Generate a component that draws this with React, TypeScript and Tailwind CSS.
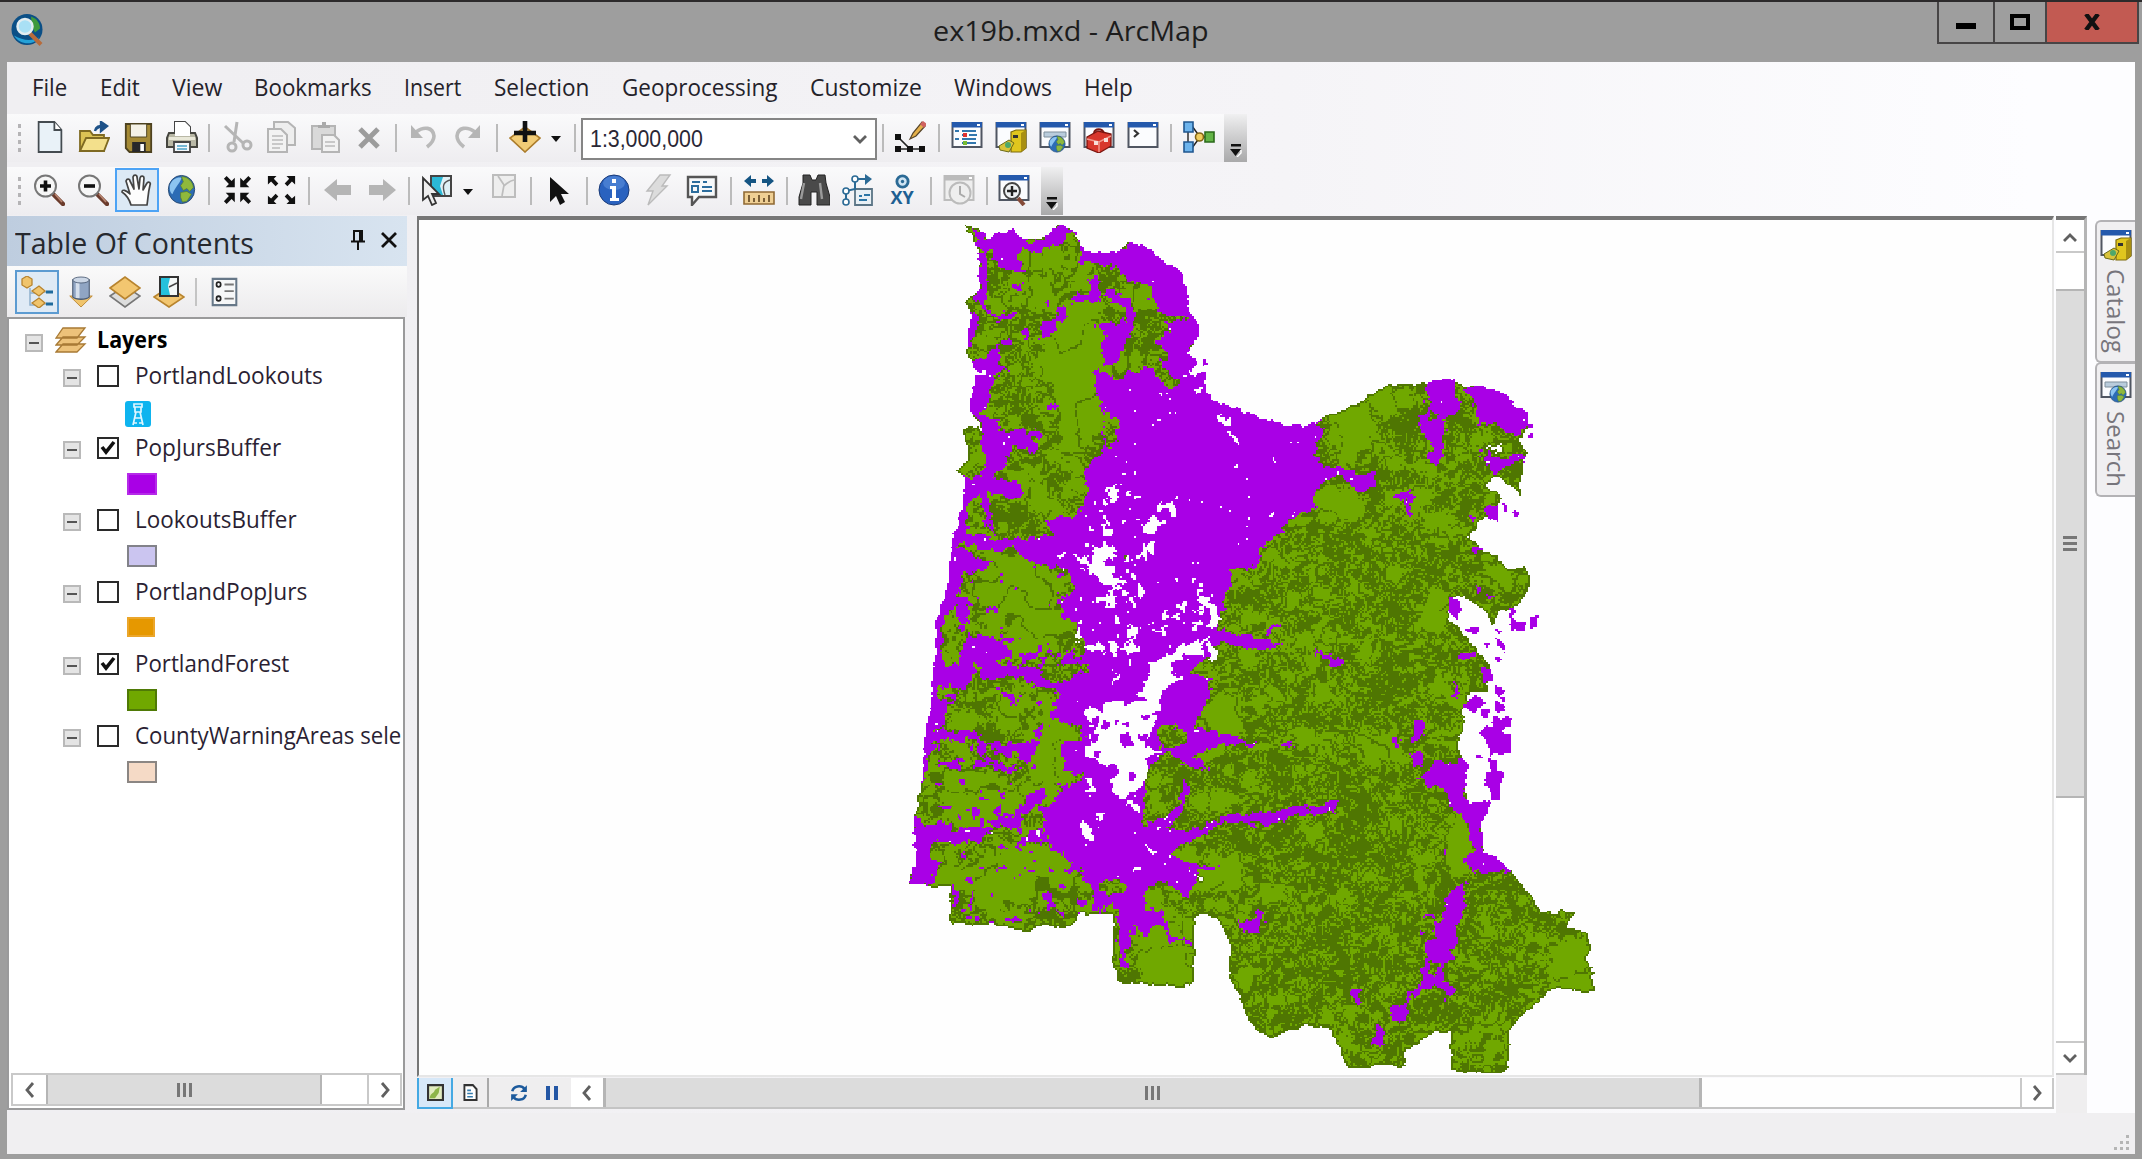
import { useLayoutEffect, useMemo, useRef, type ReactNode } from 'react';

/* ---------- text that fills a given width ---------- */
function Fit({ w, children, className = '' }: { w: number; children: string; className?: string }) {
  const ref = useRef<HTMLSpanElement>(null);
  useLayoutEffect(() => {
    const el = ref.current;
    if (el) el.style.transform = `scaleX(${w / el.offsetWidth})`;
  }, [w]);
  return (
    <span className="block shrink-0" style={{ width: w }}>
      <span ref={ref} className={`inline-block origin-left whitespace-nowrap ${className}`}>{children}</span>
    </span>
  );
}

/* ---------- map ---------- */
type Poly = { p: number[]; x0: number; x1: number; y0: number; y1: number };
const mk = (p: number[]): Poly => {
  const xs = p.filter((_, i) => i % 2 === 0);
  const ys = p.filter((_, i) => i % 2 === 1);
  return { p, x0: Math.min(...xs), x1: Math.max(...xs), y0: Math.min(...ys), y1: Math.max(...ys) };
};
const sheet = (ox: number, oy: number, src: string): Poly[] =>
  src.trim().split(';').map((s) => s.trim()).filter(Boolean)
    .map((s) => mk(s.split(/[\s,]+/).map(Number).map((v, i) => (i % 2 === 0 ? ox : oy) + v / 3)));
const plain = (src: string): Poly[] => [mk(src.trim().split(/[\s,]+/).map(Number))];

const LAND = plain(`965,226 977,230 988,240 995,235 1013,231 1020,240 1047,237 1058,225 1070,230 1078,240 1082,250 1097,253 1117,253
1127,243 1145,247 1155,258 1177,270 1184,282 1187,308 1200,328 1193,347 1187,353 1195,362 1187,378 1202,373 1205,392 1212,402 1233,408 1258,419
1270,420 1280,426 1303,426 1317,422 1323,417 1343,410 1362,402 1373,392 1387,385 1427,385 1433,382 1453,380 1463,387 1480,385 1508,397 1513,408
1527,412 1527,430 1517,442 1527,453 1521,467 1520,497 1510,487 1495,477 1485,487 1503,498 1485,517 1467,537 1480,550 1495,557 1505,570 1525,568
1530,583 1517,607 1497,613 1492,625 1482,610 1463,598 1450,598 1447,620 1458,630 1473,647 1480,658 1488,665 1487,692 1470,693 1460,713 1463,723
1457,747 1460,757 1468,767 1463,787 1468,803 1490,802 1480,828 1482,853 1493,857 1510,872 1527,893 1540,912 1553,915 1560,910 1573,913 1565,927
1585,933 1590,950 1585,960 1593,972 1592,993 1550,990 1537,1003 1517,1020 1508,1033 1507,1072 1497,1074 1450,1072 1450,1033 1432,1033 1403,1053
1403,1066 1345,1069 1338,1047 1330,1030 1303,1027 1270,1039 1260,1033 1247,1022 1237,993 1228,977 1228,940 1217,920 1200,915 1193,918 1193,985 1177,989
1163,987 1117,983 1112,965 1112,915 1077,915 1075,923 1062,930 1043,925 1030,931 1010,930 993,925 948,925 949,888 908,885 915,863 913,830 920,783
922,760 930,703 935,650 933,627 943,600 948,575 950,548 962,502 963,478 955,472 968,458 962,432 968,425 982,432 968,407 975,375 965,352 970,315
965,303 978,290 977,252`);

const VALLEY = plain(`1078,235 1097,248 1117,250 1127,240 1147,243 1180,266 1188,282 1192,308 1204,328 1190,350 1205,370 1210,398 1258,415 1280,420 1317,416 1323,430 1313,455
1325,467 1343,470 1362,477 1375,473 1370,490 1362,493 1340,478 1325,482 1313,493 1316,510 1297,513 1280,532 1260,550 1257,570 1233,580 1230,608
1217,617 1217,630 1247,637 1283,645 1253,652 1217,643 1210,657 1187,673 1210,680 1210,693 1193,727 1217,733 1260,747 1220,747 1190,757 1210,772
1180,765 1167,753 1147,767 1143,797 1140,827 1153,823 1177,807 1183,780 1190,787 1185,803 1167,830 1200,830 1223,815 1280,810 1293,808 1322,806 1338,801
1333,812 1280,819 1260,826 1220,823 1190,842 1170,853 1193,867 1218,866 1197,873 1187,900 1177,890 1160,883 1143,893 1143,910 1160,912 1172,937 1190,941
1190,946 1170,942 1157,925 1143,938 1130,923 1133,937 1123,953 1127,970 1120,967 1117,930 1112,903 1093,913 1092,890 1080,873 1060,873 1070,863
1050,847 1043,817 1053,797 1080,780 1063,770 1063,743 1080,740 1077,727 1050,720 1058,693 1043,690 1083,672 1087,663 1057,667 1067,650 1077,643
1073,625 1060,617 1058,603 1073,592 1067,568 1050,568 1020,558 1017,543 1053,535 1043,522 1073,518 1087,492 1083,472 1100,455 1103,428 1100,402 1093,385
1100,358 1080,262`);

const PURPLE: Poly[] = [
  ...sheet(900, 215, `210,40 260,70 340,48 370,80 440,70 480,30 520,50 500,75 450,105 400,120 360,100 345,130 380,175 330,165 290,160 270,110 250,115 225,90;
  225,110 255,120 262,200 250,260 270,300 350,295 340,320 270,312 225,260 235,200; 195,290 222,290 215,400 195,405;
  205,440 250,430 290,390 300,430 280,460 330,470 280,490 265,560 240,600 270,610 310,630 290,650 420,645 430,660 380,680 410,690 400,715 330,695 310,760 270,790 360,805 365,850 300,845 250,830 270,900 285,960 250,920 230,840 195,880 200,960 250,970 400,980 450,1040 400,1040 330,1000 230,1010 190,980 165,1000 260,1040 260,1070 190,1070 150,1200 100,1200 140,1000 180,850 185,790 240,780 245,650 220,590 195,575 225,480 210,470;
  415,320 460,310 465,360 415,380; 470,280 500,275 490,320 470,320; 350,340 380,345 375,375 355,360; 440,560 470,570 465,585 445,580; 300,380 330,370 320,400 300,390; 340,205 365,205 360,230 345,225; 430,262 450,262 445,275`),
  ...sheet(900, 600, `140,0 120,80 120,210 105,330 90,395 240,400 250,470 230,460 228,418 100,420 80,470 60,560 45,550 80,300 90,150 85,90 110,0;
  110,200 180,190 190,130 200,100 215,110 270,110 330,150 330,180 270,190 350,200 400,200 450,250 440,270 370,240 300,230 240,240 230,190 200,270 110,260;
  85,300 170,305 130,320 140,380 85,400; 250,425 330,435 420,420 395,400 430,370 430,390 380,490 340,450 320,470 270,445;
  105,485 170,488 175,512 110,502; 215,485 350,500 350,522 290,508 215,505; 300,275 350,285 350,315 320,305; 430,130 460,150 460,178;
  50,650 80,680 160,668 150,700 200,680 265,690 230,735 100,730 80,760 110,800 90,860 35,855 35,700; 260,660 330,658 350,640 380,590 440,562 430,595 380,645 350,682 260,678;
  345,755 380,700 430,685 445,735 390,730; 290,570 312,580 305,600; 215,630 232,630 225,665; 268,645 300,620 298,645; 170,755 190,755 188,780; 295,730 315,745 300,757;
  155,855 170,890 165,930 150,930; 200,910 215,910 210,935; 520,905 560,898 555,920 525,922; 465,932 488,932 485,948; 1000,970 1040,970 1060,940 1095,938 1075,1005 1010,990; 160,0 205,0 200,70 165,60`),
  ...sheet(1180, 350, `255,850 290,812 305,825 265,858; 405,900 480,938 480,952 450,948 410,922; 645,428 692,425 692,495 672,485 675,455 650,450;
  740,98 765,88 825,85 830,190 795,200 785,300 765,350 742,335 750,300 725,240 712,220 740,180;
  850,115 900,100 990,135 1000,178 1045,182 1040,240 1000,260 940,220 890,225 880,170; 900,310 960,325 1045,308 1035,332 965,350 940,385 910,335`),
  ...sheet(1260, 650, `480,385 520,345 590,345 605,315 630,355 620,385 605,410 625,455 695,452 668,530 658,540 663,605 705,615 755,668 640,672 610,635 640,600 620,530 590,500 560,470 560,420 500,410;
  445,308 485,308 487,352 453,352; 463,208 477,208 487,260 455,275; 390,276 414,278 407,294; 540,595 562,598 557,617;
  582,702 617,705 602,800 580,830 599,880 570,900 577,930 548,950 552,990 582,1020 568,1038 520,1010 480,1028 445,1050 445,1090 422,1120 383,1102 385,1080 430,1065 438,1035 475,1010 490,930 510,925 488,885 520,870 515,830 542,810 555,750;
  268,1022 292,1020 300,1067 283,1065; 338,1115 370,1145 357,1188 330,1188 343,1150; 493,798 522,798 512,818; 476,838 502,843 482,860; 60,285 98,276 98,293 62,294; 575,105 597,135 595,150 582,140; 545,1045 560,1050 555,1062`),
];

/* patches lying outside the forest edge */
const OUTLIERS: Poly[] = [
  ...sheet(1180, 350, `912,475 950,472 952,515 920,508; 958,462 982,465 975,492; 993,480 1022,492 1002,508; 863,498 888,503 872,522; 866,590 910,600 882,618; 880,708 903,715 892,732; 918,738 946,742 928,757;
  803,740 837,755 832,815 805,790; 983,773 1000,778 1000,818 1033,820 1033,843 988,842; 1046,803 1067,803 1067,834 1046,834; 853,838 892,833 888,852 856,854; 938,838 965,843 958,860; 908,880 928,882 922,896; 938,863 976,888 972,912 945,888; 832,920 887,903 882,922 838,932; 1040,222 1054,222 1054,236 1040,236; 1043,252 1058,252 1058,264 1043,264; 62,30 76,30 76,46 62,46; 58,66 74,66 72,90 55,85`),
  ...sheet(1260, 650, `662,58 693,58 693,97 664,97; 699,103 730,125 722,147 704,135; 703,156 730,168 727,187 706,187; 603,168 640,133 672,160 640,192; 661,178 687,183 682,210 664,207;
  693,206 754,203 747,232 715,247 747,258 747,312 685,318 680,287 658,250 680,226 700,235; 644,317 664,318 663,330 644,330; 680,328 707,335 705,362 728,370 717,455 690,452 690,420 668,410 675,375 695,375; 704,20 720,24 716,42 705,40; 720,143 735,145 733,156 722,155`),
];

const REGROWTH: Poly[] = [
  ...sheet(900, 215, `500,110 540,140 640,160 700,210 750,210 740,250 790,300 870,312 790,325 810,350 755,385 805,415 780,455 840,500 800,520 740,460 680,470 650,500 600,470 520,400; 655,95 680,82 690,95 670,112 660,110;
  985,1065 1040,1070 1080,1040 1080,1200 980,1200 960,1150 990,1120; 600,1065 620,1070 610,1100 598,1090; 660,1020 680,1025 665,1045; 610,590 650,620 655,680 610,700`),
  ...sheet(900, 600, `750,205 780,200 775,222 755,225; 765,385 850,385 855,420 800,450 765,430; 500,520 540,520 530,545 500,540; 520,375 545,385 545,415 520,410; 240,650 260,655 255,665; 590,850 650,840 670,870 620,890 600,880; 540,110 560,160 520,180 510,150`),
  ...sheet(1180, 350, `748,183 772,188 768,212 750,212; 160,660 205,665 205,710 180,700; 400,440 430,430 425,475 398,470; 920,290 950,280 945,300`),
  ...sheet(1260, 650, `515,935 535,940 528,975 508,980`),
];
const REBUFFER = sheet(900, 215, `580,232 640,232 690,260 705,320 685,370 665,415 640,440 605,465 598,400 620,360 605,345 580,335 680,318 670,278; 560,192 592,190 592,262 520,262 525,238 560,240`);

const HOLES: Poly[] = [
  ...sheet(900, 600, `540,325 570,330 600,345 640,295 700,310 740,240 745,190 800,165 880,125 915,150 850,160 840,190 800,220 848,235 800,255 780,290 765,350 740,400 735,450 795,458 730,475 735,545 705,580 645,592 625,550 650,530 640,500 600,500 545,468 560,420 580,380;
  528,85 548,98 530,132; 558,148 590,122 614,155 572,160; 658,145 700,122 714,155 672,168; 675,78 707,88 712,117 690,112; 900,5 947,28 948,70 912,88 932,58; 905,112 962,160 940,190; 556,538 582,538 590,585 565,582; 582,642 610,642 608,662 585,660; 538,662 577,695 578,730 545,705; 680,605 700,605 718,642 700,635; 688,818 705,800 710,812 695,825; 735,742 770,752 750,768; 872,815 905,832 892,842; 626,245 652,232 640,256; 620,0 636,0 632,28 622,20; 628,130 646,130 645,180 632,180; 760,95 800,85 795,110`),
  ...sheet(1180, 350, `108,198 150,208 145,228 120,215; 138,238 168,265 165,280 150,270; 915,300 960,292 955,302 925,308; 45,112 57,112 57,130 45,130; 60,760 100,780 110,820 75,835 90,800; 20,880 70,875 60,920 10,915`),
  ...sheet(900, 215, `718,930 750,905 790,930 752,962 720,945; 740,990 768,982 722,1048 710,1030; 578,1000 638,992 638,1025 600,1040 642,1060 645,1125 600,1120 590,1090 556,1080 575,1045; 512,1015 552,1032 575,1052 545,1058; 603,910 620,920 610,950; 558,930 582,938 570,950; 755,878 818,858 820,915 800,882 770,892; 618,1140 642,1140 640,1180 620,1178; 620,815 650,815 640,860 620,858; 668,840 688,835 682,855; 470,1015 495,1020 485,1035; 210,470 250,472 248,480 212,480`),
];
const ISLETS = sheet(900, 600, `655,400 682,403 690,430 698,440 665,448; 708,403 738,403 735,425 712,425; 663,368 682,368 680,390; 684,518 705,518 702,547 686,545; 808,190 855,182 842,218 808,208; 663,290 715,292 745,300 700,310 670,318; 722,352 742,352 742,366 722,366; 605,360 625,365 618,395 602,390; 575,355 595,360 588,385 572,380; 640,355 652,360 645,385; 568,400 590,405 588,430 568,428; 575,455 600,460 598,480 578,475`);

const inside = (g: Poly, x: number, y: number) => {
  if (x < g.x0 || x > g.x1 || y < g.y0 || y > g.y1) return false;
  const { p } = g;
  let r = false;
  for (let i = 0, j = p.length - 2; i < p.length; j = i, i += 2) {
    if (p[i + 1] > y !== p[j + 1] > y && x < ((p[j] - p[i]) * (y - p[i + 1])) / (p[j + 1] - p[i + 1]) + p[i]) r = !r;
  }
  return r;
};
const any = (l: Poly[], x: number, y: number) => l.some((g) => inside(g, x, y));
const hash = (x: number, y: number, s: number) => {
  let h = Math.imul(x, 374761393) ^ Math.imul(y, 668265263) ^ Math.imul(s, 1274126177);
  h = Math.imul(h ^ (h >>> 13), 1274126177);
  return ((h ^ (h >>> 16)) >>> 0) / 4294967295;
};
const noise = (x: number, y: number, s: number) => {
  const xi = Math.floor(x), yi = Math.floor(y);
  let u = x - xi, v = y - yi;
  u = u * u * (3 - 2 * u);
  v = v * v * (3 - 2 * v);
  const a = hash(xi, yi, s), b = hash(xi + 1, yi, s), c = hash(xi, yi + 1, s), d = hash(xi + 1, yi + 1, s);
  return a + (b - a) * u + (c - a) * v + (a - b - c + d) * u * v;
};
const fbm = (x: number, y: number, s: number) => noise(x, y, s) * 0.6 + noise(x * 2.1, y * 2.1, s + 9) * 0.4;

const CELL = 1.75, GX = 904, GY = 222, NX = 396, NY = 489;
/* stretches of smooth forest: cx, cy, rx, ry */
const SMOOTH = [[1080, 370, 26, 76], [1015, 600, 40, 45], [1050, 750, 22, 40], [980, 800, 35, 24], [1025, 870, 50, 30], [1340, 505, 22, 20], [1350, 430, 26, 22], [1570, 965, 22, 26], [1160, 960, 22, 20], [1220, 720, 18, 20], [1460, 850, 12, 36], [1390, 405, 18, 14], [1435, 610, 14, 22], [1500, 580, 14, 12]];

function buildMap() {
  const g = new Uint8Array(NX * NY);
  for (let j = 0; j < NY; j++) {
    for (let i = 0; i < NX; i++) {
      const x = GX + (i + 0.5) * CELL, y = GY + (j + 0.5) * CELL;
      const n1 = fbm(x / 6, y / 6, 1) - 0.5, n2 = fbm(x / 6, y / 6, 2) - 0.5;
      const px = x + n1 * 11, py = y + n2 * 11, qx = x + n1 * 5, qy = y + n2 * 5;
      let c = 0;
      if (any(LAND, qx, qy)) {
        c = 1;
        if (any(VALLEY, px, py) || any(PURPLE, px, py)) c = 3;
        if (c === 3 && any(REGROWTH, px, py)) c = 1;
        if (any(REBUFFER, px, py)) c = 3;
        if (c === 1 && x < 1100 && y > 560 && fbm(x / 10, y / 8, 31) > 0.76) c = 3;
        if (any(HOLES, px, py)) c = 0;
        if (c === 3) {
          const e = Math.hypot((x - 1115) / 50, (y - 570) / 100);
          const f = Math.hypot((x - 1190) / 40, (y - 615) / 55);
          const k = Math.max(0, 1 - Math.min(e, f));
          if (fbm(x / 6, y / 6, 44) > 0.87 - k * 0.3) c = 0;
        }
      }
      if (any(ISLETS, qx, qy)) c = 3;
      if (any(OUTLIERS, qx, qy)) c = 3;
      if (c === 1) {
        let sm = 0;
        for (const [cx, cy, rx, ry] of SMOOTH) sm = Math.max(sm, 1.3 - Math.hypot((x - cx) / rx, (y - cy) / ry));
        const east = Math.min(1, Math.max(0, (x - 1190) / 110));
        const low = fbm(x / 24, y / 20, 5);
        const dens = 0.5 + east * 0.28 + (low - 0.5) * 1.7 - Math.max(0, sm) * 1.5 - (x > 1480 && y > 880 ? 0.2 : 0);
        const wx = x + (noise(x / 5, y / 5, 61) - 0.5) * 7, wy = y + (noise(x / 5, y / 5, 62) - 0.5) * 7;
        const m = noise(wx / 11, wy / 10, 12);
        const t = noise(wx / 6.5, wy / 6.5, 77);
        const broad = Math.abs(noise(wx / 26, wy / 26, 20) - 0.5);
        if (broad < 0.022) c = 2;
        if (dens > 0.32 && Math.abs(m - 0.5) < 0.055) c = 2;
        if (dens > 0.44 && (Math.abs(m - 0.24) < 0.045 || Math.abs(m - 0.76) < 0.045)) c = 2;
        if (dens > 0.54 && Math.abs(t - 0.5) < 0.05 + (dens - 0.54) * 0.14) c = 2;
        if (dens > 0.72 && t < 0.25) c = 2;
      }
      g[j * NX + i] = c;
    }
  }
  const out = g.slice();
  for (let j = 1; j < NY - 1; j++)
    for (let i = 1; i < NX - 1; i++) {
      const k = j * NX + i;
      if (g[k] === 1 && (!g[k - 1] || !g[k + 1] || !g[k - NX] || !g[k + NX])) out[k] = 2;
    }
  const d = ['', '', '', ''];
  for (let j = 0; j < NY; j++) {
    let i = 0;
    while (i < NX) {
      const c = out[j * NX + i];
      let e = i + 1;
      while (e < NX && out[j * NX + e] === c) e++;
      if (c) d[c] += `M${i} ${j}h${e - i}v1h${i - e}z`;
      i = e;
    }
  }
  return d;
}

function ForestMap() {
  const d = useMemo(buildMap, []);
  return (
    <svg className="block h-[856px] w-[1635px]" viewBox="418 221 1635 856" shapeRendering="crispEdges">
      <g transform={`translate(${GX} ${GY}) scale(${CELL})`}>
        <path d={d[1]} fill="#70a800" />
        <path d={d[2]} fill="#4f7602" />
        <path d={d[3]} fill="#a900e6" />
      </g>
    </svg>
  );
}

/* ---------- icons ---------- */
function Svg({ children, s = 'h-8 w-8' }: { children: ReactNode; s?: string }) {
  return <svg viewBox="0 0 32 32" className={`${s} shrink-0`} fill="none" preserveAspectRatio="none">{children}</svg>;
}
const Win = ({ gray = false }: { gray?: boolean }) => (
  <>
    <rect x="1.5" y="2" width="29" height="24" fill={gray ? '#eee' : '#fbfcfe'} stroke={gray ? '#bdbdbd' : '#505662'} strokeWidth="2" />
    <path d="M1 1h30v5.5H1z" fill={gray ? '#bbb' : '#2459ac'} />
    <path d="M26 3h3v2h-3z" fill="#fff" />
  </>
);
const Globe = ({ x = 16, y = 16, r = 15 }: { x?: number; y?: number; r?: number }) => (
  <g transform={`translate(${x} ${y}) scale(${r / 15})`}>
    <circle r="14.5" fill="#2c6cb5" stroke="#26486f" />
    <path d="M-13 -4C-10 -12-3 -13 0 -12C-2 -6-7 -3-10 5C-13 2-13 0-13 -4" fill="#8cc4f0" />
    <path d="M0-13C7-14 13-7 13-2L9 2 6-1 2 1-1-4 2-8zM-1 3L6 2 11 5 6 12 1 13-1 8z" fill="#8fb83c" stroke="#557d24" strokeWidth=".7" />
  </g>
);
const Mag = ({ plus }: { plus: boolean }) => (
  <Svg>
    <path d="M21 21l9 9" stroke="#6b3b2c" strokeWidth="4.500" strokeLinecap="round" />
    <path d="M22 20l7 8" stroke="#b88570" strokeWidth="1.6" />
    <circle cx="12.500" cy="12" r="10.500" fill="#f6f6f6" stroke="#777" strokeWidth="2" />
    <path d={plus ? 'M7 12h11M12.500 6.500v11' : 'M7 12h11'} stroke="#111" strokeWidth="3.6" />
  </Svg>
);
const I: Record<string, ReactNode> = {
  new: <Svg s="h-8 w-[28px]"><path d="M3 1h18l8 8v22H3z" fill="#e9f2f8" stroke="#444b50" strokeWidth="2" /><path d="M21 1v8h8" fill="#fff" stroke="#444b50" strokeWidth="2" /></Svg>,
  open: <Svg><path d="M2 30V10h10l3 4h11v16z" fill="#dcc254" stroke="#7f6a22" strokeWidth="1.8" /><path d="M2 30l6-13h23l-5 13z" fill="#f3e08c" stroke="#7f6a22" strokeWidth="1.8" /><path d="M17 10c1-5 4-5 8-5M23 1l6 4-6 5z" stroke="#1e5288" strokeWidth="2.4" fill="#1e5288" /></Svg>,
  save: <Svg s="h-8 w-[29px]"><path d="M2 3h28v28H6l-4-4z" fill="#a58a35" stroke="#4d4220" strokeWidth="2" /><path d="M7 3h18v13H7z" fill="#f4f1e6" stroke="#4d4220" /><path d="M9 21h15v10H9z" fill="#28282a" /><path d="M18 23h4v7h-4z" fill="#fff" /></Svg>,
  print: <Svg><path d="M9 15V1h10l5 5v9" fill="#fff" stroke="#444" strokeWidth="2" /><path d="M3 12h26l2 5v9H1v-9z" fill="#b9b8a6" stroke="#45453f" strokeWidth="2" /><path d="M9 15V1h10l5 5v9z" fill="#fff" /><path d="M3 16h26v3H3z" fill="#e9e8d8" /><path d="M8 21h16v10H8z" fill="#f4f8fb" stroke="#444" strokeWidth="1.8" /><path d="M11 25h10M11 28h10" stroke="#4ba1c9" strokeWidth="1.6" /></Svg>,
  cut: <Svg><path d="M4 5l18 17M16 1l-3 20" stroke="#b5b5b5" strokeWidth="3" /><circle cx="11" cy="26" r="4" stroke="#b5b5b5" strokeWidth="3" /><circle cx="26" cy="24" r="4" stroke="#b5b5b5" strokeWidth="3" /></Svg>,
  copy: <Svg><path d="M9 1h14l7 6v17H9z" fill="#eee" stroke="#b5b5b5" strokeWidth="2" /><path d="M3 8h13l6 6v17H3z" fill="#f2f2f2" stroke="#b5b5b5" strokeWidth="2" /><path d="M7 15h11M7 19h11M7 23h11M7 27h8" stroke="#bbb" strokeWidth="1.6" /></Svg>,
  paste: <Svg><path d="M3 5h23v23H3z" fill="#d9d9d9" stroke="#b5b5b5" strokeWidth="2" /><path d="M9 7V4h4V1h4v3h4v3z" fill="#aaa" /><path d="M13 14h12l5 5v12H13z" fill="#f2f2f2" stroke="#b5b5b5" strokeWidth="2" /><path d="M16 21h10M16 25h10" stroke="#bbb" strokeWidth="1.6" /></Svg>,
  del: <Svg><path d="M7 8l18 18M25 8L7 26" stroke="#9c9c9c" strokeWidth="5" /></Svg>,
  undo: <Svg><path d="M8 11C16 5 25 6 26 15c0 5-3 8-7 11" stroke="#b9b9b9" strokeWidth="3.600" /><path d="M3 4v13h12z" fill="#b5b5b5" /></Svg>,
  redo: <Svg><path d="M23 11C15 5 6 6 5 15c0 5 3 8 7 11" stroke="#b9b9b9" strokeWidth="3.600" /><path d="M28 4v13H16z" fill="#b5b5b5" /></Svg>,
  add: <Svg><path d="M16 6l15 11-15 14L1 17z" fill="#f2cc76" stroke="#ab7c2b" strokeWidth="1.6" /><path d="M5 12h22M16 0v21" stroke="#111" strokeWidth="4.6" /></Svg>,
  editor: <Svg><path d="M4 16l12 12H4h23" stroke="#222" strokeWidth="1.6" /><path d="M1 13h6v6H1zM1 25h6v6H1zM13 25h6v6h-6zM25 25h6v6h-6z" fill="#111" /><path d="M16 18l3-6L28 1l4 3-10 11z" fill="#e4b04a" stroke="#55442a" strokeWidth="1.2" /><path d="M26 3l3-3 4 3-3 4z" fill="#cf625f" /></Svg>,
  toc: <Svg><Win /><path d="M4 10h4M11 10h14M4 18h4M11 18h14M11 14h3M18 14h8M11 22h14" stroke="#3277ae" strokeWidth="1.8" /><path d="M12 12h4v4h-4z" fill="#d33" /><path d="M12 20h4v4h-4z" fill="#7b3" /></Svg>,
  catalog: <Svg><Win /><path d="M16 11l5-2h10v18l-5 4H16z" fill="#e0c61e" stroke="#7d6a0c" strokeWidth="1.2" /><path d="M26 12l5-3v18l-5 4z" fill="#a88f12" /><path d="M18 14h5v3h-5z" fill="#333" /><path d="M4 25l10-6 5 3-5 9-9-2z" fill="#d9c33a" stroke="#6b6a18" /><circle cx="13" cy="24" r="3" fill="#4ea76a" /></Svg>,
  search: <Svg><Win /><path d="M5 11h22v5H5z" fill="#b9ccdc" stroke="#7f8f9c" /><Globe x={18} y={23} r={8.5} /></Svg>,
  toolbox: <Svg><Win /><path d="M4 16l11-6 13 3v12l-12 7L4 27z" fill="#d8372c" stroke="#7b150f" strokeWidth="1.3" /><path d="M11 12c1-5 8-5 10 0" stroke="#7b150f" strokeWidth="2" /><path d="M4 18l12 3 12-6M16 21v10" stroke="#f19a8d" strokeWidth="1.4" /><path d="M11 20h4v4h-4zM21 17h4v4h-4z" fill="#f8ded9" /></Svg>,
  python: <Svg><Win /><path d="M7 9l4 3.5L7 16" stroke="#333" strokeWidth="2.2" /></Svg>,
  model: <Svg><path d="M5 5v22M9 5l8 11M9 27l8-11h8" stroke="#222" strokeWidth="1.4" /><path d="M1 1h9v10H1zM1 21h9v10H1z" fill="#6db4ec" stroke="#20578f" strokeWidth="1.6" /><circle cx="16.500" cy="16" r="4" fill="#f1cd5d" stroke="#836414" strokeWidth="1.6" /><path d="M22 11h9v10h-9z" fill="#63b446" stroke="#2b6a1b" strokeWidth="1.6" /></Svg>,
  pan: <Svg><path d="M10 31C8 24 4 20 1 18c0-3 4-2 8 2L5 7c1-3 4-2 4 0l4 8L12 3c1-3 4-2 4 0l2 12 1-11c1-3 4-2 4 0l-1 12 4-7c2-2 4 0 3 2-2 8-2 14-3 20z" fill="#fdfdfd" stroke="#444" strokeWidth="1.7" strokeLinejoin="round" /></Svg>,
  globe: <Svg s="h-[31px] w-[29px]"><Globe /></Svg>,
  zin: <Mag plus />,
  zout: <Mag plus={false} />,
  fixin: <Svg s="h-[30px] w-[29px]"><g fill="#111"><path d="M13 13H3l3.500-3.500L1 4l3-3 5.500 5.500L13 3zM19 13h10l-3.500-3.500L31 4l-3-3-5.500 5.500L19 3zM13 19H3l3.500 3.500L1 28l3 3 5.500-5.500L13 29zM19 19h10l-3.500 3.500L31 28l-3 3-5.500-5.500L19 29z" /></g></Svg>,
  fixout: <Svg s="h-[30px] w-[29px]"><g fill="#111"><path d="M1 1h9.500L7.500 4l5 5-3 3-5-5-3.500 3zM31 1h-9.500l3 3-5 5 3 3 5-5 3.500 3zM1 31h9.500l-3-3 5-5-3-3-5 5-3.500-3zM31 31h-9.500l3-3-5-5 3-3 5 5 3.500-3z" /></g></Svg>,
  back: <Svg><path d="M2 16L15 5v6h14v10H15v6z" fill="#b5b5b5" /></Svg>,
  fwd: <Svg><path d="M30 16L17 5v6H3v10h14v6z" fill="#b5b5b5" /></Svg>,
  select: <Svg><path d="M10 2h20v20H10z" fill="#dff1f6" stroke="#444" strokeWidth="2" /><path d="M11 3h11l-3 9 3 9H11z" fill="#2bb8d6" /><path d="M29 6c-7 2-8 6-5 15" stroke="#555" strokeWidth="1.4" /><path d="M2 4v22l5-4 4 9 4-2-4-9h7z" fill="#eee" stroke="#333" strokeWidth="1.8" /></Svg>,
  clear: <Svg><path d="M5 1h22v22H5z" fill="#eee" stroke="#bdbdbd" strokeWidth="2" /><path d="M10 2l6 9-2 11M26 6c-5 1-8 4-10 6" stroke="#bdbdbd" strokeWidth="1.7" /></Svg>,
  pointer: <Svg><path d="M7 3v25l6-6 4 9 5-3-4-8h8z" fill="#111" /></Svg>,
  info: <Svg><circle cx="16" cy="16" r="15" fill="#2a62bf" stroke="#1b3b78" /><ellipse cx="16" cy="9" rx="11" ry="7" fill="#5b8fdd" opacity=".6" /><path d="M14 5h4v4h-4zM12 12h6v12h3v3h-9v-3h2v-9h-2z" fill="#fff" /></Svg>,
  bolt: <Svg><path d="M18 1h10l-8 11h5L6 31l5-14H5z" fill="#dcdcdc" stroke="#bbb" strokeWidth="1.4" /></Svg>,
  popup: <Svg><path d="M2 3h28v20H13l-7 8v-8H2z" fill="#f7f9fa" stroke="#555" strokeWidth="2.4" /><path d="M6 8h8M17 8h4M6 12h6v6H6zM16 13h10M16 17h10" stroke="#2c6d9d" strokeWidth="2" /></Svg>,
  measure: <Svg><path d="M1 7l7-6v4h5v4H8v4zM31 7l-7-6v4h-5v4h5v4z" fill="#155583" /><path d="M1 18h30v12H1z" fill="#efcf94" stroke="#906a35" strokeWidth="1.6" /><path d="M6 21v7M11 24v4M16 21v7M21 24v4M26 21v7" stroke="#5e4320" strokeWidth="1.6" /></Svg>,
  binoc: <Svg><path d="M5 1h7l2 5h4l2-5h7l1 8 4 14v8H19V18h-6v13H1v-8L5 9z" fill="#4a4a4a" stroke="#222" /><path d="M6 9l-3 16M22 9l2 16" stroke="#9a9a9a" strokeWidth="2.4" /></Svg>,
  route: <Svg><path d="M13 15h17v16H13z" fill="#e9f0f5" stroke="#5a7485" strokeWidth="1.8" /><path d="M17 22h3M22 21h6M17 26h8" stroke="#2c76a6" strokeWidth="2" /><path d="M4 28V17l9-2V5h12" stroke="#2b6a95" strokeWidth="2" /><path d="M23 0l7 5-7 6z" fill="#2b6a95" /><g fill="#fff" stroke="#2b6a95" strokeWidth="1.6"><circle cx="4" cy="28" r="3" /><circle cx="4" cy="17" r="3" /><circle cx="13" cy="5" r="3" /></g></Svg>,
  clock: <Svg><Win gray /><circle cx="17" cy="19" r="10.500" fill="#eee" stroke="#bbb" strokeWidth="2" /><path d="M17 12v8l5 3" stroke="#aaa" strokeWidth="2" /></Svg>,
  zwin: <Svg><Win /><path d="M20 24l6 7" stroke="#854a38" strokeWidth="4" /><circle cx="14" cy="17" r="8" fill="#eef1f3" stroke="#444" strokeWidth="2" /><path d="M9 17h10M14 12v10" stroke="#222" strokeWidth="2.4" /></Svg>,
};

const Cell = ({ n, w = 'w-[44px]' }: { n: string; w?: string }) => <div className={`flex shrink-0 items-center justify-center pb-[3px] ${w}`}>{I[n]}</div>;
const Sep = ({ c }: { c: string }) => <div className={`flex shrink-0 items-center ${c}`}><div className="h-[28px] w-[2px] bg-[#bbb]" /></div>;
const Drop = () => (
  <div className="flex w-[18px] shrink-0 items-center justify-center"><svg viewBox="0 0 10 6" className="mt-[2px] h-[6px] w-[10px]"><path d="M0 0h10L5 6z" fill="#111" /></svg></div>
);
const Handle = ({ w }: { w: string }) => (
  <div className={`flex shrink-0 flex-col justify-center gap-[4px] pl-[11px] ${w}`}>
    {[0, 1, 2, 3].map((i) => <div key={i} className="h-[4px] w-[3px] bg-[#b5b4b6]" />)}
  </div>
);
const Overflow = ({ c }: { c: string }) => (
  <div className={`flex shrink-0 flex-col items-center justify-end bg-linear-to-b from-[#f0f0f1] to-[#a9a9aa] pb-[5px] ${c}`}>
    <svg viewBox="0 0 12 14" className="h-[14px] w-[12px]"><path d="M1 1h10v2.500H1zM0 6h11L5.500 13z" fill="#111" /><path d="M11 7v3l-4 4" stroke="#fff" strokeWidth="1.4" fill="none" /></svg>
  </div>
);
const Chevron = ({ d, c = '#606060' }: { d: string; c?: string }) => (
  <svg viewBox="0 0 16 16" className="h-4 w-4 shrink-0"><path d={d} stroke={c} strokeWidth="2.8" fill="none" /></svg>
);
const UP = 'M2 11l6-6 6 6', DOWN = 'M2 5l6 6 6-6', LEFT = 'M11 1L5 8l6 7', RIGHT = 'M5 1l6 7-6 7';

const MENU: [string, number, string][] = [
  ['File', 35, 'w-[68px]'], ['Edit', 40, 'w-[72px]'], ['View', 50, 'w-[82px]'], ['Bookmarks', 118, 'w-[150px]'], ['Insert', 57, 'w-[90px]'],
  ['Selection', 95, 'w-[128px]'], ['Geoprocessing', 156, 'w-[188px]'], ['Customize', 112, 'w-[144px]'], ['Windows', 98, 'w-[130px]'], ['Help', 49, 'w-[60px]'],
];

const LAYERS: { name: string; w: number; on?: boolean; sw?: string }[] = [
  { name: 'PortlandLookouts', w: 188 },
  { name: 'PopJursBuffer', w: 146, on: true, sw: 'h-[22px] w-[30px] border-[#b52be8] bg-[#a900e6]' },
  { name: 'LookoutsBuffer', w: 162, sw: 'h-[22px] w-[30px] border-[#828289] bg-[#cbc5f0]' },
  { name: 'PortlandPopJurs', w: 172, sw: 'h-[20px] w-[28px] border-[#eba62b] bg-[#e69800]' },
  { name: 'PortlandForest', w: 154, on: true, sw: 'h-[22px] w-[30px] border-[#4f7a06] bg-[#70a800]' },
  { name: 'CountyWarningAreas sele', w: 266, sw: 'h-[22px] w-[30px] border-[#8b8683] bg-[#f5dac6]' },
];
const Minus = () => (
  <div className="flex h-[18px] w-[18px] shrink-0 items-center justify-center border-2 border-[#b9b9b9] bg-[#e4e4e4]"><div className="h-[2px] w-[10px] bg-[#555]" /></div>
);

function Toc() {
  return (
    <section className="flex w-[400px] shrink-0 flex-col">
      <header className="flex h-[50px] shrink-0 items-center bg-linear-to-r from-[#becddf] to-[#d8e4f0] pl-[8px]">
        <Fit w={239} className="pt-[3px] text-[29px] leading-[47px] text-[#26292f]">Table Of Contents</Fit>
        <svg viewBox="0 0 14 20" className="mb-[2px] ml-[97px] h-[20px] w-[14px]"><path d="M3 11V1h8v10M0 11.500h14M7 12v8M9 1v10" stroke="#111" strokeWidth="2" fill="none" /></svg>
        <svg viewBox="0 0 16 16" className="mb-[2px] ml-[16px] h-4 w-4"><path d="M1 1l14 14M15 1L1 15" stroke="#111" strokeWidth="2.800" /></svg>
      </header>
      <div className="flex h-[51px] shrink-0 items-center bg-linear-to-b from-[#fafafa] to-[#ecebed] pl-[8px]">
        <div className="flex h-[44px] w-[44px] items-center justify-center border-2 border-[#5c9bd1] bg-[#dfeaf5]">
          <Svg><path d="M9 12v17h6M9 17h6M22 16h9M22 28h9" stroke="#8fb0cb" strokeWidth="1.500" /><path d="M25 16h7M25 28h7" stroke="#1f6a9c" strokeWidth="3" /><g fill="#f0c46c" stroke="#b8842e" strokeWidth="1.300"><path d="M1 3l5-3 5 3v6l-5 3-5-3z" /><path d="M11 15l7-5 6 5-6 5zM11 27l7-5 6 5-6 5z" /></g></Svg>
        </div>
        <div className="flex w-[44px] justify-center"><Svg s="h-8 w-6"><path d="M1 20h30L16 31z" fill="#f0c46c" stroke="#b8842e" /><path d="M5 4h22v17c-4 3-18 3-22 0z" fill="#90a5c3" stroke="#4c5c74" strokeWidth="1.500" /><path d="M9 6h5v16H9z" fill="#d5dfec" /><ellipse cx="16" cy="4" rx="11" ry="3" fill="#ccd7e6" stroke="#4c5c74" /></Svg></div>
        <div className="flex w-[44px] justify-center"><Svg><path d="M1 20l15-10 15 10-15 11z" fill="#ddd" stroke="#777" strokeWidth="1.600" /><path d="M1 12L16 1l15 11-15 11z" fill="#f2c670" stroke="#b8842e" strokeWidth="1.600" /></Svg></div>
        <div className="flex w-[44px] justify-center"><Svg><path d="M1 21l15-10 15 10-15 10z" fill="#f2c670" stroke="#b8842e" strokeWidth="1.600" /><path d="M7 1h18v19H7z" fill="#f3f8f8" stroke="#333" strokeWidth="2" /><path d="M8 2h9l-2 8 2 9H8z" fill="#26c1dc" /><path d="M24 7l-8 4" stroke="#444" strokeWidth="1.500" /></Svg></div>
        <div className="ml-[4px] mr-[14px] h-[28px] w-[2px] bg-[#c4c4c4]" />
        <Svg s="h-[30px] w-[27px]"><path d="M2 2h28v28H2z" fill="#f6f7f8" stroke="#667788" strokeWidth="2.400" /><path d="M16 8h11M16 15h11M16 23h11" stroke="#777" strokeWidth="2" /><circle cx="9" cy="8" r="2.500" stroke="#222" strokeWidth="2" /><circle cx="9" cy="23" r="2.500" stroke="#222" strokeWidth="2" /></Svg>
      </div>
      <div className="mb-[3px] flex w-[398px] grow flex-col overflow-hidden border-2 border-[#9a9a9b] bg-white">
        <div className="flex h-[39px] shrink-0 items-center pl-[16px] pt-[3px]">
          <div className="mt-[6px]"><Minus /></div>
          <svg viewBox="0 0 32 26" className="ml-[12px] h-[26px] w-[32px]"><g fill="#edc27a" stroke="#a87a35" strokeWidth="1.300"><path d="M1 25l7-8h22l-8 8zM1 18l7-8h22l-8 8zM1 11l7-10h22l-8 10z" /></g></svg>
          <div className="mb-[3px] ml-[10px]"><Fit w={70} className="text-[23px] font-bold leading-[34px] text-black">Layers</Fit></div>
        </div>
        <div className="flex grow flex-col">
          {LAYERS.map((l) => (
            <div key={l.name} className="flex h-[72px] shrink-0 flex-col">
              <div className="flex h-[36px] items-center pl-[54px]">
                <div className="mt-[4px]"><Minus /></div>
                <div className="ml-[16px] flex h-[22px] w-[22px] shrink-0 items-center justify-center border-[2.500px] border-[#2a2a2a] bg-white">
                  {l.on && <svg viewBox="0 0 16 16" className="h-4 w-4"><path d="M2 7l4 5 8-10" stroke="#111" strokeWidth="3.600" fill="none" /></svg>}
                </div>
                <div className="mb-[3px] ml-[16px]"><Fit w={l.w} className="text-[23px] leading-[34px] text-[#2b1f33]">{l.name}</Fit></div>
              </div>
              <div className="flex h-[36px] items-start pl-[116px] pt-[5px]">
                {l.sw ? <div className={`ml-[2px] mt-[2px] border-2 ${l.sw}`} /> : (
                  <svg viewBox="0 0 26 26" className="mt-[2px] h-[26px] w-[26px]"><rect width="26" height="26" rx="3" fill="#0eb4ef" /><path d="M9 3h8v3H9zM10 6v5h6V6M11 11L8 24M15 11l3 13M10 17h6M9 22h3M14 22h4" stroke="#dff6ff" strokeWidth="1.700" fill="none" /></svg>
                )}
              </div>
            </div>
          ))}
        </div>
        <div className="mb-[2px] ml-[2px] mr-[1px] flex h-[33px] shrink-0 border-2 border-[#c9c9c9] bg-white">
          <div className="flex w-[33px] items-center justify-center"><Chevron d={LEFT} /></div>
          <div className="flex w-[276px] items-center justify-center gap-[3px] border-x-2 border-[#b5b5b5] bg-[#dcdcdc]">
            {[0, 1, 2].map((i) => <div key={i} className="h-[14px] w-[3px] bg-[#777]" />)}
          </div>
          <div className="grow" />
          <div className="flex w-[33px] items-center justify-center border-l-2 border-[#c9c9c9]"><Chevron d={RIGHT} /></div>
        </div>
      </div>
    </section>
  );
}

export default function App() {
  return (
    <div className="flex h-[1159px] w-[2142px] flex-col overflow-hidden bg-[#9e9e9e] font-['Open_Sans',sans-serif]">
      <header className="flex h-[62px] shrink-0 items-start border-t-2 border-[#2c2a2b]">
        <svg viewBox="0 0 32 32" className="ml-[11px] mt-[11px] h-[33px] w-[32px]">
          <circle cx="16" cy="16" r="15.500" fill="#0b4f86" /><path d="M3 22C8 31 22 33 28 24 20 28 12 27 3 22z" fill="#25a2d8" /><path d="M20 3c6 2 9 7 9 12l-5 4-3-6z" fill="#3f9a3c" />
          <path d="M19 20l11 11" stroke="#b76b3b" strokeWidth="4" /><circle cx="14" cy="13" r="7.500" fill="#a9e0f5" stroke="#e3edf1" strokeWidth="2.500" />
        </svg>
        <div className="ml-[890px] mt-[5px]"><Fit w={276} className="text-[28px] leading-[46px] text-[#1d1d1d]">ex19b.mxd - ArcMap</Fit></div>
        <div className="ml-auto mr-[3px] flex h-[42px] border-2 border-t-0 border-[#474546]">
          <div className="flex w-[56px] items-center justify-center border-r-2 border-[#474546] pt-2"><div className="h-[6px] w-5 bg-black" /></div>
          <div className="flex w-[52px] items-center justify-center border-r-2 border-[#474546]"><div className="h-4 w-5 border-4 border-black" /></div>
          <div className="flex w-[90px] items-center justify-center bg-[#c25a52]"><svg viewBox="0 0 18 16" className="h-4 w-[18px]"><path d="M3 0l12 16M15 0L3 16" stroke="#111" strokeWidth="4.400" /></svg></div>
        </div>
      </header>

      <main className="ml-[7px] mr-[7px] flex h-[1092px] flex-col bg-linear-to-r from-[#f0eff2] from-10% via-[#f5f4f7] via-60% to-[#fdfdff] to-95%">
        <nav className="flex h-[52px] shrink-0 items-start pl-[25px]">
          {MENU.map(([t, w, c]) => <div key={t} className={`shrink-0 ${c}`}><Fit w={w} className="text-[23.500px] leading-[50px] text-[#24222a]">{t}</Fit></div>)}
        </nav>
        <div className="flex h-[48px] w-[1240px] shrink-0 items-stretch bg-linear-to-b from-[#fafafb] to-[#eeedf0]">
          <Handle w="w-[21px]" />
          <Cell n="new" /><Cell n="open" /><Cell n="save" /><Cell n="print" />
          <Sep c="w-[11px] pl-[4px]" />
          <Cell n="cut" /><Cell n="copy" /><Cell n="paste" /><Cell n="del" />
          <Sep c="w-[11px] pl-[4px]" />
          <Cell n="undo" /><Cell n="redo" />
          <Sep c="w-[13px] pl-[6px]" />
          <Cell n="add" /><Drop />
          <Sep c="w-[16px] pl-[9px]" />
          <div className="mb-[2px] mt-auto flex h-[42px] w-[296px] shrink-0 items-center self-center border-2 border-[#858585] bg-white pl-[7px]">
            <Fit w={113} className="font-['Liberation_Sans',sans-serif] text-[24px] leading-[34px] text-[#2a2735]">1:3,000,000</Fit>
            <div className="ml-auto mr-[7px] flex"><Chevron d={DOWN} /></div>
          </div>
          <Sep c="w-[11px] pl-[5px]" />
          <Cell n="editor" />
          <Sep c="w-[13px] pl-[6px]" />
          <Cell n="toc" /><Cell n="catalog" /><Cell n="search" /><Cell n="toolbox" /><Cell n="python" />
          <Sep c="w-[12px] pl-[5px]" />
          <Cell n="model" />
          <Overflow c="ml-[3px] w-[23px]" />
        </div>
        <div className="mt-[5px] flex h-[48px] w-[1056px] shrink-0 items-stretch bg-linear-to-b from-[#fafafb] to-[#eeedf0]">
          <Handle w="w-[20px]" />
          <Cell n="zin" /><Cell n="zout" />
          <div className="mb-auto mt-px flex h-[44px] w-[44px] shrink-0 items-center justify-center border-2 border-[#4da3f5] bg-[#dce9f5]">{I.pan}</div>
          <Cell n="globe" />
          <Sep c="w-[12px] pl-[5px]" />
          <Cell n="fixin" /><Cell n="fixout" />
          <Sep c="w-[13px] pl-[5px]" />
          <Cell n="back" /><Cell n="fwd" />
          <Sep c="w-[11px] pl-[4px]" />
          <Cell n="select" /><Drop /><Cell n="clear" w="w-[53px]" />
          <Sep c="w-[7px]" />
          <Cell n="pointer" />
          <Sep c="w-[11px] pl-[5px]" />
          <Cell n="info" /><Cell n="bolt" /><Cell n="popup" />
          <Sep c="w-[13px] pl-[6px]" />
          <Cell n="measure" />
          <Sep c="w-[11px] pl-[5px]" />
          <Cell n="binoc" /><Cell n="route" />
          <div className="flex w-[44px] shrink-0 flex-col items-center justify-center pb-[3px]">
            <svg viewBox="0 0 16 16" className="h-[15px] w-[15px]"><circle cx="8" cy="8" r="6" fill="#cfe4f3" stroke="#2b6a95" strokeWidth="3" /><circle cx="8" cy="8" r="1.800" fill="#2b6a95" /></svg>
            <span className="text-[18px] font-bold leading-[16px] text-[#1e5f92]">XY</span>
          </div>
          <Sep c="w-[13px] pl-[6px]" />
          <Cell n="clock" />
          <Sep c="w-[11px] pl-[5px]" />
          <Cell n="zwin" />
          <Overflow c="ml-[5px] w-[22px]" />
        </div>

        <div className="mt-[1px] flex h-[897px] shrink-0">
          <Toc />
          <section className="ml-[10px] flex w-[1637px] shrink-0 flex-col">
            <div className="h-[861px] border-l-2 border-t-[4px] border-[#767676] border-b-2 border-b-[#e6e6e6] border-r-2 border-r-[#e6e6e6] bg-[#fefefe]">
              <ForestMap />
            </div>
            <div className="mt-px flex h-[31px] border-b-2 border-[#c4c4c4] bg-[#efeeef]">
              <div className="flex h-[31px] w-[36px] shrink-0 items-center justify-center border-2 border-t-0 border-[#45a9e3] bg-[#d7e8f8]">
                <Svg s="h-[17px] w-[17px]"><path d="M2 2h28v28H2z" fill="#e2ecc0" stroke="#333" strokeWidth="4" /><path d="M5 27c2-12 8-8 10-16l9-6-2 12-7 10z" fill="#8db548" /></Svg>
              </div>
              <div className="flex w-[34px] shrink-0 items-center justify-center"><Svg s="h-[17px] w-[15px]"><path d="M3 2h18l8 8v20H3z" fill="#fff" stroke="#333" strokeWidth="4" /><path d="M9 12h8M9 18h12M9 24h12" stroke="#357bad" strokeWidth="3" /></Svg></div>
              <div className="w-[2px] bg-[#a9a9a9]" />
              <div className="flex w-[60px] shrink-0 items-center justify-center"><Svg s="h-[18px] w-[18px]"><path d="M4 13C6 3 20 1 26 9M28 19C26 29 12 31 6 23" stroke="#1c5a9c" strokeWidth="4.500" /><path d="M30 2v12H18zM2 30V18h12z" fill="#1c5a9c" /></Svg></div>
              <div className="-ml-[3px] mr-[3px] flex w-[8px] shrink-0 items-center gap-[4px]"><div className="h-[14px] w-[4px] shrink-0 bg-[#2457a5]" /><div className="h-[14px] w-[4px] shrink-0 bg-[#2457a5]" /></div>
              <div className="ml-[14px] flex w-[32px] shrink-0 items-center justify-center bg-white"><Chevron d={LEFT} /></div>
              <div className="flex w-[1099px] shrink-0 items-center justify-center gap-[3px] border-x-[3px] border-[#b5b5b5] bg-[#dcdcdc]">
                {[0, 1, 2].map((i) => <div key={i} className="h-[14px] w-[3px] bg-[#777]" />)}
              </div>
              <div className="grow bg-[#fefefe]" />
              <div className="flex w-[34px] shrink-0 items-center justify-center border-x-2 border-[#c9c9c9] bg-white"><Chevron d={RIGHT} /></div>
            </div>
          </section>
          <div className="ml-[2px] flex w-[31px] shrink-0 flex-col">
            <div className="flex h-[859px] flex-col border-r-[3px] border-t-[4px] border-[#b5b5b5] border-t-[#767676] bg-white">
              <div className="flex h-[33px] shrink-0 items-center justify-center border-b-2 border-[#c9c9c9] pt-[4px]"><Chevron d={UP} /></div>
              <div className="h-[36px] shrink-0" />
              <div className="flex h-[509px] shrink-0 flex-col items-center justify-center gap-[3px] border-y-2 border-[#b5b5b5] bg-[#dcdcdc]">
                {[0, 1, 2].map((i) => <div key={i} className="h-[3px] w-[14px] bg-[#777]" />)}
              </div>
              <div className="grow" />
              <div className="flex h-[34px] shrink-0 items-center justify-center border-y-2 border-[#c9c9c9]"><Chevron d={DOWN} /></div>
            </div>
            <div className="grow bg-[#efeeef]" />
          </div>
          <aside className="ml-auto mt-[4px] flex w-[40px] shrink-0 flex-col">
            <div className="flex h-[143px] flex-col items-center rounded-l-md border-2 border-r-0 border-[#b3b2b5] bg-[#f0eff1] pt-[7px]">
              {I.catalog}
              <span className="mt-[8px] text-[24px] leading-[26px] text-[#77757c] [writing-mode:vertical-rl]">Catalog</span>
            </div>
            <div className="-mt-[1px] flex h-[135px] flex-col items-center rounded-l-md border-2 border-r-0 border-[#b3b2b5] bg-[#f0eff1] pt-[7px]">
              {I.search}
              <span className="mt-[8px] text-[24px] leading-[26px] text-[#77757c] [writing-mode:vertical-rl]">Search</span>
            </div>
          </aside>
        </div>
        <footer className="flex grow items-end justify-end bg-[#f0eff1] pb-[3px] pr-[5px]">
          <svg viewBox="0 0 16 16" className="h-4 w-4" fill="#b5b5b5"><path d="M12 0h3v3h-3zM12 6h3v3h-3zM6 6h3v3H6zM12 12h3v3h-3zM6 12h3v3H6zM0 12h3v3H0z" /></svg>
        </footer>
      </main>
    </div>
  );
}
